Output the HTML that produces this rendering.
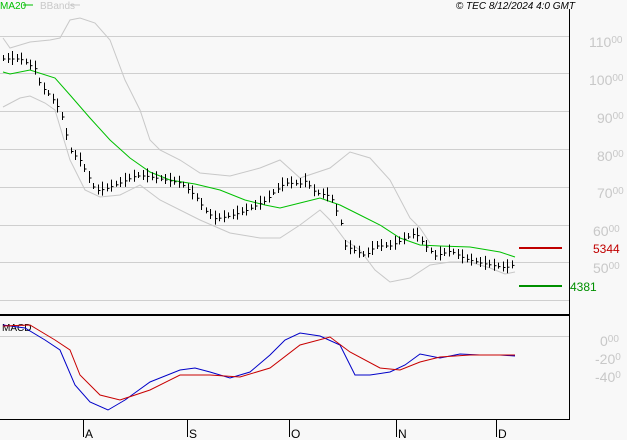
<!DOCTYPE html><html><head><meta charset="utf-8"><style>
body{margin:0;background:#f8f8f8;}
svg{display:block;font-family:"Liberation Sans",sans-serif;}
</style></head><body>
<svg id="s" width="627" height="440" xmlns="http://www.w3.org/2000/svg">
<rect width="627" height="440" fill="#f8f8f8"/>
<g stroke="#cfcfcf" stroke-width="1">
<line x1="0" y1="36.5" x2="569" y2="36.5"/><line x1="0" y1="73.5" x2="569" y2="73.5"/>
<line x1="0" y1="111.5" x2="569" y2="111.5"/><line x1="0" y1="149.5" x2="569" y2="149.5"/>
<line x1="0" y1="187.5" x2="569" y2="187.5"/><line x1="0" y1="225.5" x2="569" y2="225.5"/>
<line x1="0" y1="262.5" x2="569" y2="262.5"/><line x1="0" y1="300.5" x2="569" y2="300.5"/>
<line x1="0" y1="336.5" x2="569" y2="336.5"/>
</g>
<line x1="569.5" y1="9" x2="569.5" y2="420" stroke="#000"/>
<line x1="0" y1="315" x2="569" y2="315" stroke="#000" stroke-width="2"/>
<line x1="0" y1="419.5" x2="569" y2="419.5" stroke="#000"/>
<g stroke="#000"><line x1="83.5" y1="420" x2="83.5" y2="437"/><line x1="187.5" y1="420" x2="187.5" y2="437"/><line x1="289.5" y1="420" x2="289.5" y2="437"/><line x1="396.5" y1="420" x2="396.5" y2="437"/><line x1="496.5" y1="420" x2="496.5" y2="437"/></g>
<g font-size="12" fill="#000"><text x="85" y="438">A</text><text x="189" y="438">S</text><text x="291" y="438">O</text><text x="398" y="438">N</text><text x="498" y="438">D</text></g>
<text x="0" y="9" font-size="10" fill="#00c000">MA20</text><line x1="23" y1="5" x2="33" y2="5" stroke="#00c000"/>
<text x="40" y="9" font-size="10" fill="#c8c8c8">BBands</text><line x1="70" y1="5" x2="80" y2="5" stroke="#c8c8c8"/>
<text x="575" y="9" font-size="10" font-style="italic" fill="#000" text-anchor="end">© TEC 8/12/2024 4:0 GMT</text>
<g fill="#c8c8c8" font-size="14">
<text x="589" y="47">110<tspan font-size="10" dy="-4">00</tspan></text>
<text x="589" y="85">100<tspan font-size="10" dy="-4">00</tspan></text>
<text x="597" y="123">90<tspan font-size="10" dy="-4">00</tspan></text>
<text x="597" y="161">80<tspan font-size="10" dy="-4">00</tspan></text>
<text x="597" y="198">70<tspan font-size="10" dy="-4">00</tspan></text>
<text x="593" y="236">60<tspan font-size="10" dy="-4">00</tspan></text>
<text x="593" y="273">50<tspan font-size="10" dy="-4">00</tspan></text>
<text x="600" y="346">0<tspan font-size="10" dy="-4">00</tspan></text>
<text x="595" y="364">-20<tspan font-size="10" dy="-4">0</tspan></text>
<text x="595" y="382">-40<tspan font-size="10" dy="-4">0</tspan></text>
</g>
<line x1="519" y1="248" x2="562" y2="248" stroke="#c00000" stroke-width="2"/>
<text x="593" y="253" font-size="12" fill="#c00000">5344</text>
<line x1="519" y1="286" x2="562" y2="286" stroke="#009000" stroke-width="2"/>
<text x="570" y="291" font-size="12" fill="#009000">4381</text>
<text x="2" y="331" font-size="10" fill="#000">MACD</text>
<g fill="none" stroke-width="1">
<polyline stroke="#c8c8c8" points="3,38 10,48 30,42 50,40 60,38 70,20 80,18 95,23 110,40 125,80 140,110 150,140 160,150 180,160 200,173 230,176 260,168 280,160 300,178 330,168 350,152 370,158 390,180 410,218 420,228 430,243"/>
<polyline stroke="#c8c8c8" points="3,107 20,98 30,96 45,103 55,110 70,160 85,190 100,197 120,195 140,185 160,200 200,220 230,233 260,238 280,238 300,225 320,210 330,220 345,240 360,250 375,270 390,282 410,278 430,265 450,262 470,262 490,268 505,274 515,272"/>
<polyline stroke="#00c000" points="3,72 10,74 30,70 55,78 70,95 90,118 110,140 130,158 150,172 170,180 195,184 220,190 245,200 265,205 280,208 300,203 320,198 340,205 360,215 380,225 400,238 420,245 440,246 470,247 500,252 515,257"/>
<polyline stroke="#0000c8" points="3,325 25,328 45,340 60,350 75,385 90,402 108,410 125,400 150,382 180,370 195,368 210,372 230,378 250,372 270,355 285,340 300,333 320,336 340,345 355,375 370,375 390,372 405,365 420,354 440,358 460,354 480,355 500,355 515,356"/>
<polyline stroke="#c80000" points="3,326 30,325 55,340 70,350 80,375 100,395 120,400 150,390 180,375 210,375 240,377 270,368 300,345 330,337 350,352 380,368 400,370 420,362 440,357 470,355 515,355"/>
</g>
<g id="bars" stroke="#000" stroke-width="1"></g>
</svg>
<script>
var c=[[3,58],[20,58],[35,68],[40,85],[50,95],[60,110],[65,130],[70,150],[80,160],[90,180],[95,190],[105,188],[120,182],[135,175],[145,175],[160,178],[180,182],[195,195],[205,210],[215,218],[230,215],[245,210],[255,205],[265,200],[275,190],[285,182],[300,183],[305,180],[315,192],[330,195],[340,220],[345,245],[355,250],[365,255],[375,245],[390,245],[400,240],[410,235],[415,232],[425,245],[435,255],[450,250],[465,258],[480,262],[495,265],[505,267],[515,263]];
function f(x){for(var i=1;i<c.length;i++){if(x<=c[i][0]){var a=c[i-1],b=c[i];return a[1]+(b[1]-a[1])*(x-a[0])/(b[0]-a[0]);}}return c[c.length-1][1];}
var g=document.getElementById('bars'),s='',k=0;
for(var x=3;x<=515;x+=4.5){var y=f(x),h=6+(k*7%5)*2;var xx=Math.round(x)+0.5;
s+='<line x1="'+xx+'" y1="'+(y-h/2)+'" x2="'+xx+'" y2="'+(y+h/2)+'"/><line x1="'+xx+'" y1="'+(y+1)+'" x2="'+(xx+2)+'" y2="'+(y+1)+'"/>';k++;}
g.innerHTML=s;
</script>
</body></html>
